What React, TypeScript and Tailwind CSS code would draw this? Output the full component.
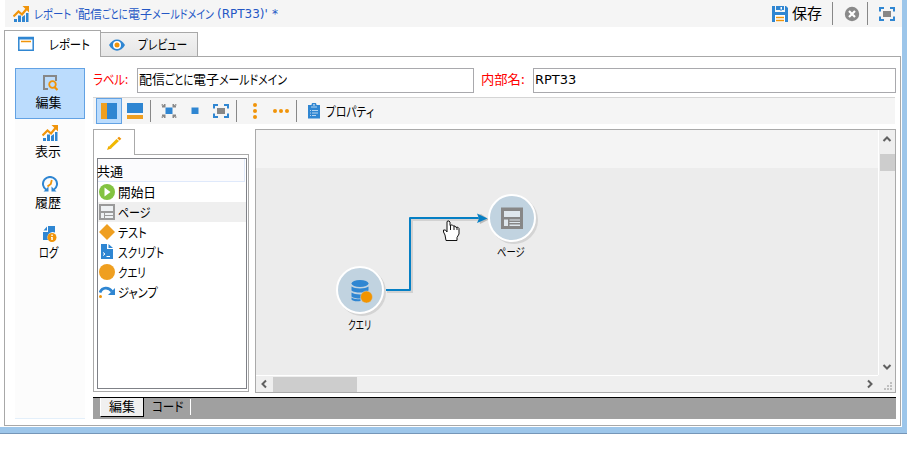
import { useLayoutEffect, useRef } from "react";
import type { ReactNode } from "react";

const BLUE = "#2f86d2";
const ORANGE = "#f0940a";
const GRAY = "#878787";

/* Text condensed or widened to fill the width its className gives it. */
function Fit({ className, children }: { className: string; children: string }) {
  const box = useRef<HTMLSpanElement>(null);
  const text = useRef<HTMLSpanElement>(null);
  useLayoutEffect(() => {
    const apply = () => {
      if (!box.current || !text.current) return;
      const natural = text.current.offsetWidth;
      if (natural > 0) text.current.style.transform = `scaleX(${box.current.clientWidth / natural})`;
    };
    apply();
    document.fonts.ready.then(apply);
  }, []);
  return (
    <span ref={box} className={`inline-block shrink-0 whitespace-nowrap ${className}`}>
      <span ref={text} className="inline-block origin-left [font-feature-settings:'palt']">
        {children}
      </span>
    </span>
  );
}

function Icon({ className = "", children }: { className?: string; children: ReactNode }) {
  return (
    <svg width="16" height="16" viewBox="0 0 16 16" className={`block shrink-0 ${className}`}>
      {children}
    </svg>
  );
}

const ChartIcon = ({ className }: { className?: string }) => (
  <Icon className={className}>
    <path d="M1 13h3v3H1zM5 9.500h3V16H5zM9 11l3-2v7H9zM13 7h2.500v9H13z" fill={BLUE} />
    <path d="M.5 10.500L5.500 5.500l3.500 3L13.500 3" fill="none" stroke={ORANGE} strokeWidth="2.200" />
    <path d="M9.500 0H16v6.500z" fill={ORANGE} />
  </Icon>
);

const FullscreenIcon = ({ className }: { className?: string }) => (
  <Icon className={className}>
    <path d="M1 5.500V2h4M11 2h4v3.500M15 10.500V14h-4M5 14H1v-3.500" fill="none" stroke={BLUE} strokeWidth="2" />
    <path d="M4 5h8v6H4z" fill={GRAY} />
  </Icon>
);

const PageIcon = ({ className, color }: { className?: string; color: string }) => (
  <Icon className={className}>
    <path d="M0 0h16v16H0z" fill={color} />
    <path d="M2 2h12v5H2zM2 9h3v5H2zM6 9h8v2H6zM6 12h8v2H6z" fill="#eef1f3" />
  </Icon>
);

const MagnifierIcon = () => (
  <Icon>
    <path d="M6 14H2V1h12v5" fill="none" stroke={GRAY} strokeWidth="2" />
    <circle cx="10.500" cy="9.500" r="3.300" fill="none" stroke={ORANGE} strokeWidth="1.800" />
    <path d="M12.500 12L15.500 15" stroke={ORANGE} strokeWidth="2.200" />
  </Icon>
);

const HistoryIcon = () => (
  <Icon>
    <path d="M4.500 14A7 7 0 1 1 11.500 14" fill="none" stroke={BLUE} strokeWidth="2" />
    <path d="M1.500 15.500h5V10.500zM14.500 15.500h-5V10.500z" fill={BLUE} />
    <path d="M9.800 4L8.800 8 5.500 10.500" fill="none" stroke={ORANGE} strokeWidth="1.800" />
  </Icon>
);

const LogIcon = () => (
  <Icon>
    <path d="M6 0h7v6.500a5.500 5.500 0 0 0-7 7.500H1V6h5z" fill={BLUE} />
    <path d="M1.500 4.500L5 .5v4z" fill={BLUE} />
    <circle cx="10" cy="11.500" r="4.500" fill={ORANGE} />
    <path d="M9.300 8.500h1.500V10H9.300zM9 11h1.800v3H9.300v-2H9z" fill="#fff" />
  </Icon>
);

const sideItems = [
  { label: "編集", width: "w-[26px]", icon: <MagnifierIcon />, active: true },
  { label: "表示", width: "w-[26px]", icon: <ChartIcon />, active: false },
  { label: "履歴", width: "w-[26px]", icon: <HistoryIcon />, active: false },
  { label: "ログ", width: "w-[19px]", icon: <LogIcon />, active: false },
];

const paletteItems = [
  {
    label: "開始日",
    width: "w-[38px]",
    icon: (
      <Icon>
        <circle cx="8" cy="8" r="8" fill="#83c341" />
        <path d="M5.500 3.500L11.500 8l-6 4.500z" fill="#fff" />
      </Icon>
    ),
  },
  { label: "ページ", width: "w-[33px]", icon: <PageIcon color="#9a9a9a" />, active: true },
  {
    label: "テスト",
    width: "w-[29px]",
    icon: (
      <Icon>
        <path d="M8 0l8 8-8 8-8-8z" fill="#ef9f20" />
      </Icon>
    ),
  },
  {
    label: "スクリプト",
    width: "w-[46px]",
    icon: (
      <Icon>
        <path d="M2 0h6v5h6v10H2zM9.500 0L14 4H9.500z" fill={BLUE} />
        <path d="M4 8.500l2 1.500-2 1.500M7.500 12.500H11" fill="none" stroke="#fff" />
      </Icon>
    ),
  },
  {
    label: "クエリ",
    width: "w-[28px]",
    icon: (
      <Icon>
        <circle cx="8" cy="8" r="8" fill="#ef9f20" />
      </Icon>
    ),
  },
  {
    label: "ジャンプ",
    width: "w-[40px]",
    icon: (
      <Icon>
        <path d="M1 8.500C3 3 9.500 2.500 13 7.500" fill="none" stroke={BLUE} strokeWidth="2.800" />
        <path d="M16 4v7H9z" fill={BLUE} />
        <circle cx="1.500" cy="12.500" r="1.500" fill={ORANGE} />
      </Icon>
    ),
  },
];

function TitleBar() {
  return (
    <div className="ml-[5px] flex h-[27px] items-center bg-[#f5f5f5] pl-2">
      <ChartIcon className="mt-px" />
      <div className="ml-[5px] flex text-[12px] text-[#2457c5]">
        <Fit className="w-[37px]">レポート</Fit>
        <Fit className="ml-1 w-[3px]">'</Fit>
        <Fit className="w-6">配信</Fit>
        <Fit className="w-[26px]">ごとに</Fit>
        <Fit className="w-6">電子</Fit>
        <Fit className="w-[62px]">メールドメイン</Fit>
        <Fit className="ml-[3px] w-[51px] font-['DejaVu_Sans']">(RPT33)'</Fit>
        <Fit className="ml-[4px] w-[6px] font-['DejaVu_Sans']">*</Fit>
      </div>
      <div className="ml-auto flex items-center">
        <Icon className="mt-px">
          <path d="M0 0h3v6h10V0h1l2 2v14H0z" fill={BLUE} />
          <path d="M4 0h4v4H4zM10 0h2v4h-2zM8 0h2v4.500H8z" fill={BLUE} />
          <path d="M8.500 1h1.500v2.500H8.500z" fill="#fff" />
          <path d="M3 9h10v7H3z" fill="#fff" />
          <path d="M4 11.500h8M4 14.500h8" stroke={ORANGE} strokeWidth="1.500" />
        </Icon>
        <Fit className="ml-1 w-[30px] text-[15px] text-black">保存</Fit>
        <div className="ml-2.5 h-[23px] w-px bg-[#888]" />
        <Icon className="ml-[11px]">
          <circle cx="8" cy="8" r="7.200" fill="#8a8a8a" />
          <path d="M5 5l6 6M11 5l-6 6" stroke="#fff" strokeWidth="2.200" />
        </Icon>
        <div className="ml-[7px] h-[23px] w-px bg-[#888]" />
        <FullscreenIcon className="ml-[11px] mr-[7px] mt-px" />
      </div>
    </div>
  );
}

function Tabs() {
  return (
    <div className="ml-1 mt-[3px] flex h-[27px] items-end">
      <div className="flex h-[27px] w-[97px] items-center border border-b-0 border-[#a8a8a8] bg-white pl-[13px]">
        <Icon>
          <path d="M.8 1.500h14.400v12.700H.8z" fill="#fff" stroke={BLUE} strokeWidth="1.500" />
          <path d="M0 1h16v2.500H0z" fill={BLUE} />
          <path d="M3 5.500h10" stroke={ORANGE} strokeWidth="1.500" />
        </Icon>
        <Fit className="ml-[15px] w-[41px] text-[13px]">レポート</Fit>
      </div>
      <div className="flex h-[25px] w-[97px] items-center border border-l-0 border-[#a8a8a8] bg-gradient-to-b from-[#f3f3f3] to-[#e6e6e6] pl-2">
        <Icon>
          <path d="M0 8C4 .5 12 .5 16 8 12 15.500 4 15.500 0 8z" fill={BLUE} />
          <circle cx="8" cy="8" r="4" fill="#fff" />
          <circle cx="8" cy="8" r="2.500" fill={ORANGE} />
        </Icon>
        <Fit className="mb-px ml-[13px] w-[49px] text-[13px]">プレビュー</Fit>
      </div>
      <div className="h-px grow bg-[#a8a8a8]" />
      <div className="w-px" />
    </div>
  );
}

function Sidebar() {
  return (
    <div className="h-[351px] w-[70px] shrink-0 border-b border-[#e3effa] bg-[#fcfcfc]">
      {sideItems.map((item) => (
        <div
          key={item.label}
          className={`flex flex-col items-center border ${
            item.active ? "h-[51px] border-[#62a2e4] bg-[#bbdcfd] pt-[6px]" : "h-[50.5px] border-transparent pt-[5px]"
          }`}
        >
          {item.icon}
          <Fit className={`text-[13px] leading-5 ${item.width} ${item.active ? "-ml-[3px] mt-px" : "-ml-1"}`}>{item.label}</Fit>
        </div>
      ))}
    </div>
  );
}

function Fields() {
  return (
    <div className="flex h-[25px] items-center text-[13px] leading-[18px] text-[#f00]">
      <Fit className="mb-1 ml-0 w-[35px]">ラベル:</Fit>
      <div className="ml-[9px] flex h-[25px] w-[337px] items-center border border-[#a9a9ad] bg-white pb-[3px] pl-px text-black">
        <Fit className="w-[26px]">配信</Fit>
        <Fit className="w-7">ごとに</Fit>
        <Fit className="w-[26px]">電子</Fit>
        <Fit className="w-[68px]">メールドメイン</Fit>
      </div>
      <Fit className="mb-[3px] ml-[7px] w-[44px]">内部名:</Fit>
      <div className="ml-2 flex h-[25px] w-[363px] items-center border border-[#a9a9ad] bg-white pb-px pl-px text-black">
        <Fit className="w-[41px] font-['DejaVu_Sans']">RPT33</Fit>
      </div>
    </div>
  );
}

function Toolbar() {
  return (
    <div className="mt-1 flex h-[27px] w-[802px] items-center border-t border-[#d5d5d5] bg-[#f5f5f5] pl-[3px]">
      <div className="flex h-[26px] w-[26px] items-center justify-center border border-[#62a2e4] bg-[#bbdcfd]">
        <Icon>
          <path d="M0 0h6v16H0z" fill="#ef9f20" />
          <path d="M6 0h10v16H6z" fill={BLUE} />
        </Icon>
      </div>
      <Icon className="ml-[5px]">
        <path d="M0 0h16v10H0z" fill={BLUE} />
        <path d="M0 12h16v4H0z" fill="#ef9f20" />
      </Icon>
      <div className="ml-[7px] h-[22px] w-px bg-[#888]" />
      <Icon className="ml-2.5">
        <path d="M4.500 4.500h7v6.500h-7z" fill={BLUE} />
        <path d="M0 2l1.500-1 1.500 1.500V1h1.500v3.500H1V3h1zM16 2l-1.500-1L13 2.500V1h-1.500v3.500H15V3h-1zM0 14l1.500 1L3 13.500V15h1.500v-3.500H1V13h1zM16 14l-1.500 1-1.500-1.500V15h-1.500v-3.500H15V13h-1z" fill={GRAY} />
      </Icon>
      <Icon className="ml-2.5">
        <path d="M4.500 4.500h7v6.500h-7z" fill={BLUE} />
      </Icon>
      <FullscreenIcon className="ml-2.5" />
      <div className="ml-[7px] h-[22px] w-px bg-[#888]" />
      <Icon className="ml-2.5">
        <circle cx="8" cy="2" r="2" fill={ORANGE} />
        <circle cx="8" cy="8" r="2" fill={ORANGE} />
        <circle cx="8" cy="14" r="2" fill={ORANGE} />
      </Icon>
      <Icon className="ml-2.5">
        <circle cx="2" cy="8" r="2" fill={ORANGE} />
        <circle cx="8" cy="8" r="2" fill={ORANGE} />
        <circle cx="14" cy="8" r="2" fill={ORANGE} />
      </Icon>
      <div className="ml-[7px] h-[22px] w-px bg-[#888]" />
      <Icon className="ml-[9px]">
        <path d="M2 2h3.500a2.500 2.500 0 0 1 5 0H14v13.500H2z" fill={BLUE} />
        <path d="M5 4h6M4 7.500h1M6 7.500h6M4 10h1M6 10h6M4 12.500h1M6 12.500h4" stroke="#b5d5f0" />
        <path d="M7.300 1.300h1.400v1.200H7.300z" fill="#fff" />
      </Icon>
      <Fit className="mb-px ml-[4px] w-[48px] text-[13px]">プロパティ</Fit>
    </div>
  );
}

function Palette() {
  return (
    <div className="flex h-[263px] w-[156px] flex-col">
      <div className="flex h-[26px] items-end">
        <div className="flex h-[26px] w-[42px] items-center justify-center border border-b-0 border-[#aaa]">
          <Icon>
            <path d="M1 15l1.500-4 3 2.500z" fill="#f1ad00" />
            <path d="M3 11.500L10.500 4 13 6l-8 7.500z" fill="#f1b800" />
            <path d="M11.300 3.300l1.700-1.600 2.300 2-1.600 1.800z" fill={ORANGE} />
          </Icon>
        </div>
        <div className="h-px grow bg-[#aaa]" />
      </div>
      <div className="grow border border-t-0 border-[#aaa] p-[3px] pb-[2px] pr-px pt-[3px]">
        <div className="h-full border border-[#7f8187] text-[13px] leading-5">
          <div className="mr-px flex h-[23px] items-center border-b border-r border-[#dfe9fb] bg-[#fbfbfd] pt-px">
            <Fit className="-ml-px w-[26px]">共通</Fit>
          </div>
          {paletteItems.map((item) => (
            <div key={item.label} className={`flex h-5 items-center pl-px ${item.active ? "bg-[#efefef]" : ""}`}>
              {item.icon}
              <Fit className={`ml-[3px] ${item.width}`}>{item.label}</Fit>
            </div>
          ))}
        </div>
      </div>
    </div>
  );
}

function Diagram() {
  return (
    <div className="relative h-[245px] w-[622px] bg-[#ececec]">
      <div className="h-[38px] bg-[#f4f4f4]" />
      <svg width="622" height="245" viewBox="256 130 622 245" className="absolute left-0 top-0">
        <path d="M387 292h25V220H485" fill="none" stroke="#d2d2d2" strokeWidth="2" />
        <path d="M386 290H410V218H480" fill="none" stroke="#057fc4" strokeWidth="2" strokeLinejoin="round" />
        <path d="M478 215l3-1 8 5.500-9 4.500z" fill="#bbb" />
        <path d="M477 213.500l10.500 5L477 223l2-4.500z" fill="#057fc4" />
        <circle cx="362" cy="292" r="24" fill="#d4d4d4" />
        <circle cx="514" cy="220" r="24" fill="#d4d4d4" />
        <circle cx="360" cy="290" r="23" fill="#c1d3e0" stroke="#fff" strokeWidth="2" />
        <circle cx="512" cy="218" r="23" fill="#c1d3e0" stroke="#fff" strokeWidth="2" />
        <g fill={BLUE}>
          <path d="M351.500 286.500c3 2.500 14 2.500 17 0v4c-3 2.800-14 2.800-17 0z" />
          <path d="M351.500 292.500c3 2.500 14 2.500 17 0v4c-3 2.800-14 2.800-17 0z" />
          <path d="M351.500 297.500c2 1.500 5 2 9 1.500v2c-4 .8-8 0-9-1.500z" />
          <ellipse cx="360" cy="283.500" rx="8.500" ry="3.500" />
        </g>
        <circle cx="366.500" cy="297" r="6" fill="#f29400" stroke="#c1d3e0" strokeWidth=".5" />
        <path d="M501 207.500h22V229h-22z" fill={GRAY} />
        <path d="M504 211h16v6h-16zM504 219.500h4v6.500h-4zM509.500 219.500H520v1h-10.500zM509.500 222H520v1h-10.500zM509.500 224.500H520v1.500h-10.500z" fill="#dfe7ed" />
        <g transform="translate(-2.500)">
          <path
            d="M448.500 240.500h11v-3l2-3.500v-5.500l-1.500-1.500-1.500.5-1-1.500h-1.500l-1-1h-1.500l-1 .5v-3.500l-1-1h-1.500l-.5 1v10l-1.500-2h-2v2l1.500 3z"
            fill="#fff"
            stroke="#111"
          />
          <path d="M453 225v5M456.500 226v4M459.500 227v3" stroke="#111" fill="none" />
        </g>
      </svg>
      <div className="absolute left-[92px] top-[187px] text-[12px] leading-4">
        <Fit className="w-[23px]">クエリ</Fit>
      </div>
      <div className="absolute left-[241px] top-[114px] text-[12px] leading-4">
        <Fit className="w-[28px]">ページ</Fit>
      </div>
    </div>
  );
}

function Chevron({ d, className = "" }: { d: string; className?: string }) {
  return (
    <svg width="10" height="10" viewBox="0 0 10 10" className={`block shrink-0 ${className}`}>
      <path d={d} fill="none" stroke="#606060" strokeWidth="2" />
    </svg>
  );
}

function Canvas() {
  return (
    <div className="ml-1.5 h-[264px] w-[641px] border border-[#aaa] bg-[#efefef]">
      <div className="flex h-[245px]">
        <Diagram />
        <div className="flex w-[17px] flex-col items-center border-l border-white pt-1">
          <Chevron d="M1.500 7L5 3.500 8.500 7" />
          <div className="mt-2.5 h-[17px] w-[15px] bg-[#cdcdcd]" />
          <Chevron d="M1.500 3L5 6.500 8.500 3" className="mb-[3px] mt-auto" />
        </div>
      </div>
      <div className="flex h-[17px]">
        <div className="flex w-[622px] items-center border-t border-white pl-[3px] pr-[3px]">
          <Chevron d="M7 1.500L3.500 5 7 8.500" />
          <div className="ml-1 h-[15px] w-[84px] bg-[#cdcdcd]" />
          <Chevron d="M3 1.500L6.500 5 3 8.500" className="ml-auto" />
        </div>
        <svg width="17" height="17" viewBox="0 0 17 17" className="block">
          <path d="M12 7h2v2h-2zM9 10h2v2H9zM12 10h2v2h-2zM6 13h2v2H6zM9 13h2v2H9zM12 13h2v2h-2z" fill="#bfbfbf" />
        </svg>
      </div>
    </div>
  );
}

function BottomTabs() {
  return (
    <div className="mt-1 flex h-[22px] w-[803px] border-t border-black bg-[#a0a0a0] pl-[7px] text-[13px] leading-[16px]">
      <div className="flex h-[19px] w-[44px] border-b border-l border-r border-b-black border-l-white border-r-black bg-[#f0f0f0] pl-2">
        <Fit className="w-[26px]">編集</Fit>
      </div>
      <Fit className="ml-2 w-[31px]">コード</Fit>
      <div className="ml-[7px] mt-px h-4 w-px bg-white" />
    </div>
  );
}

export default function App() {
  return (
    <div className="h-[449px] w-[923px] overflow-hidden bg-white font-['Noto_Sans_CJK_JP',sans-serif] text-black">
      <div className="h-[434px] w-[907px] border-b border-[#7596b8]">
        <div className="h-[433px] border-b-[6px] border-r-[5px] border-[#9dc6ea]">
          <TitleBar />
          <Tabs />
          <div className="ml-1 flex h-[369px] w-[897px] border-b border-l border-r border-[#a8a8a8] pl-2.5 pt-[11px]">
            <Sidebar />
            <div className="ml-2">
              <Fields />
              <Toolbar />
              <div className="mt-[5px] flex">
                <Palette />
                <Canvas />
              </div>
              <BottomTabs />
            </div>
          </div>
        </div>
      </div>
    </div>
  );
}
